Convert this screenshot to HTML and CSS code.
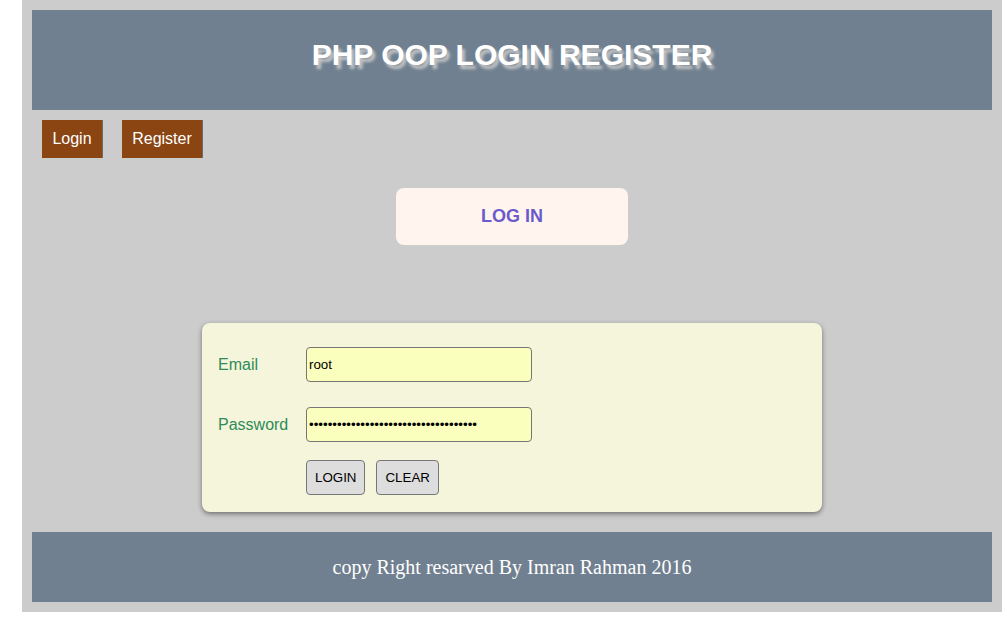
FILE: index.html
```html
<!DOCTYPE html>
<html>
<head>
<meta charset="utf-8">
<title>PHP OOP Login Register</title>
<link rel="stylesheet" href="styles.css">
</head>
<body>
<div class="wrapper">
  <header class="header">
    <h1 class="title">PHP OOP LOGIN REGISTER</h1>
  </header>
  <nav class="nav">
    <a class="nav-btn nav-login" href="#">Login</a>
    <a class="nav-btn nav-register" href="#">Register</a>
  </nav>
  <main class="main">
    <div class="page-title">LOG IN</div>
    <form class="login-form">
      <div class="row">
        <label class="label" for="email">Email</label>
        <input class="field" id="email" type="text" value="root">
      </div>
      <div class="row">
        <label class="label" for="password">Password</label>
        <input class="field" id="password" type="password" value="123456789012345678901234567890123456">
      </div>
      <div class="row actions">
        <button class="btn" type="submit">LOGIN</button>
        <button class="btn" type="reset">CLEAR</button>
      </div>
    </form>
  </main>
  <footer class="footer">copy Right resarved By Imran Rahman 2016</footer>
</div>
</body>
</html>
```

FILE: styles.css
```css
html, body {
  margin: 0;
  padding: 0;
  background: #ffffff;
}

.wrapper {
  margin-left: 22px;
  width: 960px;
  padding: 10px;
  background: #cccccc;
  font-family: "Liberation Sans", Arial, sans-serif;
}

.header {
  height: 100px;
  box-sizing: border-box;
  padding-bottom: 11px;
  background: #708090;
  display: flex;
  align-items: center;
  justify-content: center;
}

.title {
  margin: 0;
  font-size: 30px;
  font-weight: bold;
  color: #ffffff;
  text-shadow: 3px 4px 3px #c4c4c4;
}

.nav {
  display: flex;
  gap: 20px;
  padding: 10px 10px 0;
}

.nav-btn {
  display: block;
  height: 38px;
  line-height: 38px;
  text-align: center;
  background: #8b4513;
  color: #ffffff;
  font-size: 16px;
  text-decoration: none;
  box-shadow: 1px 0 0 #6b6b6b;
}

.nav-login {
  width: 60px;
}

.nav-register {
  width: 80px;
}

.main {
  display: flex;
  flex-direction: column;
  align-items: center;
  padding-top: 30px;
}

.page-title {
  width: 232px;
  height: 57px;
  line-height: 57px;
  text-align: center;
  background: #fff5ee;
  border-radius: 8px;
  color: #6a5acd;
  font-size: 18px;
  font-weight: bold;
}

.login-form {
  margin-top: 78px;
  width: 620px;
  box-sizing: border-box;
  padding: 24px 16px 17px;
  background: #f5f5dc;
  border-radius: 8px;
  box-shadow: 0 2px 5px rgba(0, 0, 0, 0.45);
  display: flex;
  flex-direction: column;
  gap: 25px;
}

.row {
  display: flex;
  align-items: center;
}

.actions {
  margin-top: -7px;
  padding-left: 88px;
  gap: 11px;
}

.label {
  width: 88px;
  color: #2e8b57;
  font-size: 16px;
}

.field {
  width: 226px;
  height: 35px;
  box-sizing: border-box;
  border: 1px solid #767676;
  border-radius: 4px;
  background: #faffbd;
  padding: 0 2px;
  font-family: "Liberation Sans", Arial, sans-serif;
  font-size: 13.33px;
  color: #000000;
}

.btn {
  height: 35px;
  box-sizing: border-box;
  padding: 0 8px;
  border: 1px solid #767676;
  border-radius: 4px;
  background: #dddddd;
  font-family: "Liberation Sans", Arial, sans-serif;
  font-size: 13.33px;
  color: #000000;
}

.footer {
  margin-top: 20px;
  height: 70px;
  background: #708090;
  color: #ffffff;
  display: flex;
  align-items: center;
  justify-content: center;
  font-family: "Liberation Serif", "Times New Roman", serif;
  font-size: 20px;
}
```
